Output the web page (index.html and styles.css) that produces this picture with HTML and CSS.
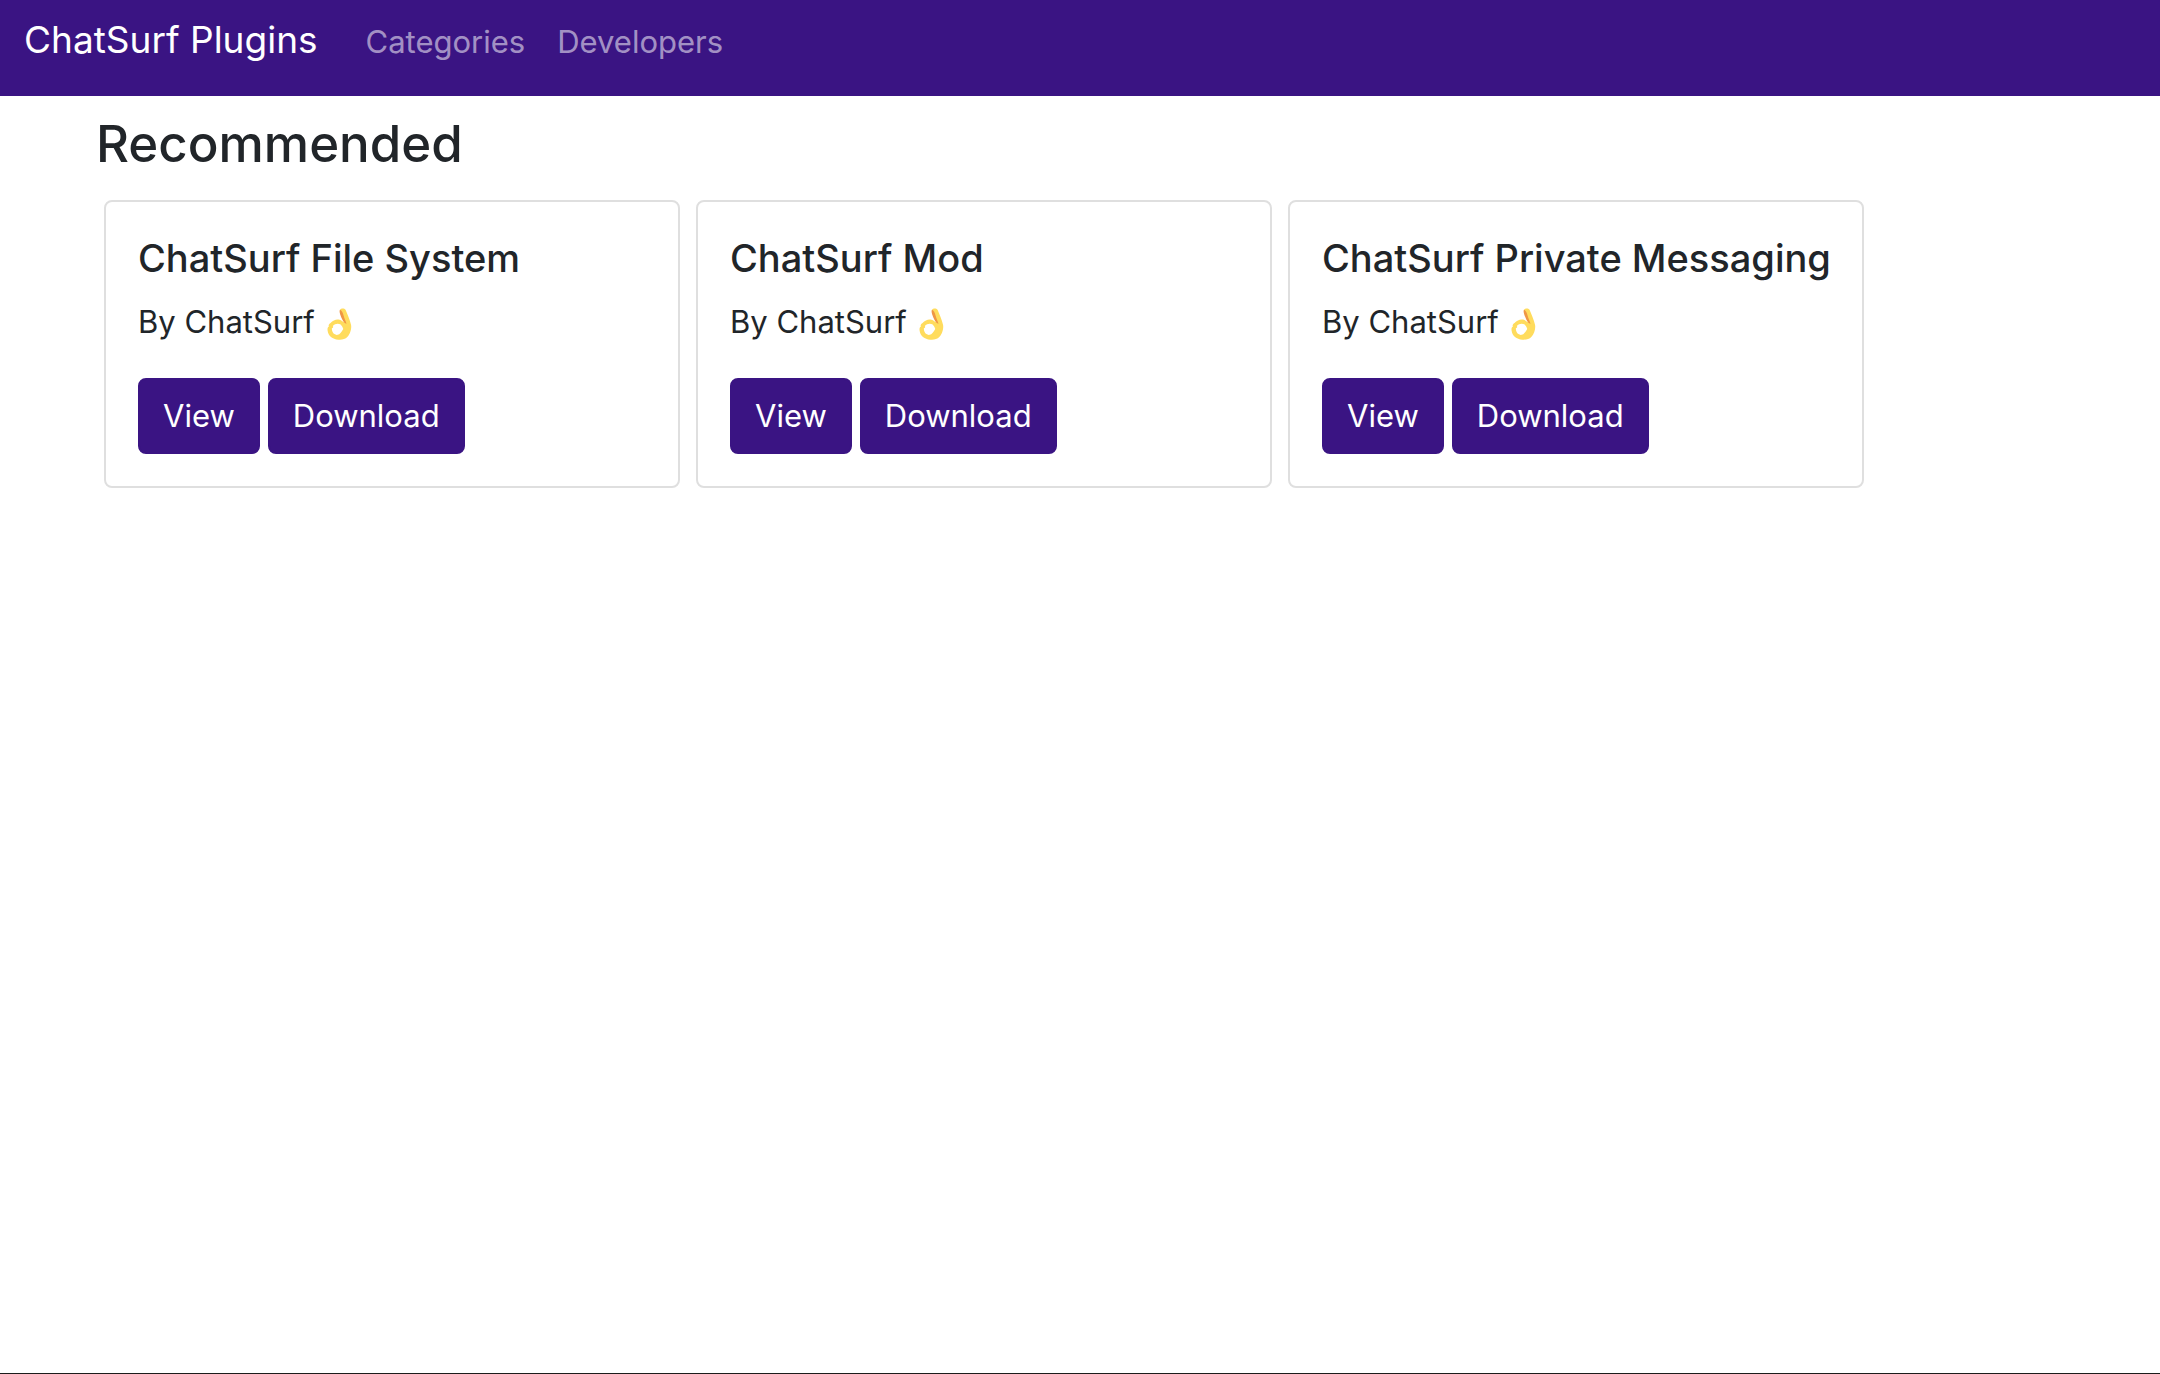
FILE: index.html
```html
<!DOCTYPE html>
<html lang="en">
<head>
<meta charset="utf-8">
<meta name="viewport" content="width=device-width, initial-scale=1">
<title>ChatSurf Plugins</title>
<link rel="stylesheet" href="styles.css">
</head>
<body>
<svg class="sprites">
  <symbol id="ok-hand" viewBox="0 0 75 98">
    <path fill="#ffdc5d" fill-rule="evenodd" d="M39 5C43 0 52 0 56 5C61 18 69 34 73 52C75 64 70 80 62 88C55 96 44 98 34 97C16 96 3 86 1 69C0 62 2 59 5 57C3 53 5 49 10 46C17 38 26 34 34 35C40 35 44 38 49 43L52 43C50 31 44 18 39 5ZM17 55C20 58 17 61 14 62C14 70 17 77 22 80C27 84 34 83 39 78C43 74 47 68 49 64C47 59 44 53 40 50C33 46 23 48 17 55Z"/>
    <path fill="#ef9645" d="M39 5C44 6 48 14 50 23C52 31 56 39 59 48C53 47 49 42 46 35C42 25 35 11 39 5Z"/>
  </symbol>
</svg>
<header class="navbar">
  <a class="brand" href="#">ChatSurf Plugins</a>
  <nav class="links">
    <a class="link" href="#">Categories</a>
    <a class="link" href="#">Developers</a>
  </nav>
</header>
<main class="container">
  <h1 class="heading">Recommended</h1>
  <div class="cards">
    <article class="card">
      <h2 class="title">ChatSurf File System</h2>
      <p class="author">By ChatSurf <svg class="emoji" role="img" aria-label="OK hand"><use href="#ok-hand"/></svg></p>
      <div class="actions"><button class="btn" type="button">View</button><button class="btn" type="button">Download</button></div>
    </article>
    <article class="card">
      <h2 class="title">ChatSurf Mod</h2>
      <p class="author">By ChatSurf <svg class="emoji" role="img" aria-label="OK hand"><use href="#ok-hand"/></svg></p>
      <div class="actions"><button class="btn" type="button">View</button><button class="btn" type="button">Download</button></div>
    </article>
    <article class="card">
      <h2 class="title">ChatSurf Private Messaging</h2>
      <p class="author">By ChatSurf <svg class="emoji" role="img" aria-label="OK hand"><use href="#ok-hand"/></svg></p>
      <div class="actions"><button class="btn" type="button">View</button><button class="btn" type="button">Download</button></div>
    </article>
  </div>
</main>
</body>
</html>
```

FILE: styles.css
```css
* {
  box-sizing: border-box;
}

body {
  margin: 0;
  min-height: 100vh;
  border-bottom: 1px solid #1c1c1c;
  background: #fff;
  color: #212529;
  font: 400 31px/48px Inter, "Liberation Sans", sans-serif;
}

.sprites {
  display: none;
}

.navbar {
  display: flex;
  align-items: baseline;
  gap: 48px;
  padding: 10px 24px 26px;
  background: #3a1483;
}

.brand {
  color: #fff;
  font-size: 37px;
  line-height: 60px;
  text-decoration: none;
}

.links {
  display: flex;
  gap: 32px;
}

.link {
  color: rgba(255, 255, 255, 0.55);
  text-decoration: none;
}

.container {
  padding: 16px 96px;
}

.heading {
  margin: 0 0 24px;
  font-size: 51px;
  line-height: 64px;
  font-weight: 500;
}

.cards {
  display: flex;
  flex-wrap: wrap;
  gap: 16px;
  padding: 0 8px;
}

.card {
  width: 576px;
  padding: 32px;
  border: 2px solid #dfdfdf;
  border-radius: 8px;
}

.title {
  margin: 0 0 16px;
  font-size: 38px;
  line-height: 48px;
  font-weight: 500;
  white-space: nowrap;
}

.author {
  display: flex;
  align-items: center;
  gap: 12px;
  margin: 0 0 32px;
}

.emoji {
  width: 25px;
  height: 32px;
  margin-top: 4px;
}

.actions {
  display: flex;
  gap: 8px;
}

.btn {
  padding: 12px 23px;
  border: 2px solid #3a1483;
  border-radius: 8px;
  background: #3a1483;
  color: #fff;
  font: inherit;
}
```
